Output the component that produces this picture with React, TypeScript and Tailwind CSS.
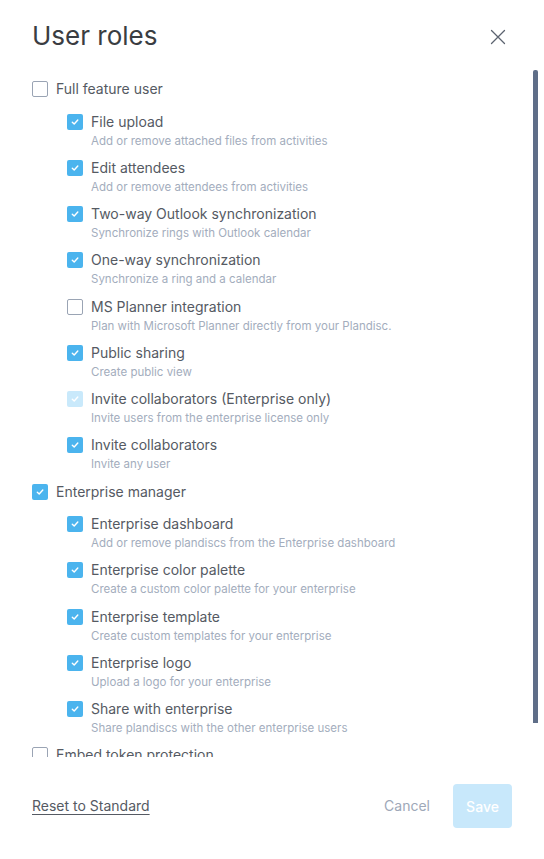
import React from "react";

type Item = { label: string; desc?: string; state: "on" | "off" | "disabled" };

const fullFeature: Item[] = [
  { label: "File upload", desc: "Add or remove attached files from activities", state: "on" },
  { label: "Edit attendees", desc: "Add or remove attendees from activities", state: "on" },
  { label: "Two-way Outlook synchronization", desc: "Synchronize rings with Outlook calendar", state: "on" },
  { label: "One-way synchronization", desc: "Synchronize a ring and a calendar", state: "on" },
  { label: "MS Planner integration", desc: "Plan with Microsoft Planner directly from your Plandisc.", state: "off" },
  { label: "Public sharing", desc: "Create public view", state: "on" },
  { label: "Invite collaborators (Enterprise only)", desc: "Invite users from the enterprise license only", state: "disabled" },
  { label: "Invite collaborators", desc: "Invite any user", state: "on" },
];

const enterprise: Item[] = [
  { label: "Enterprise dashboard", desc: "Add or remove plandiscs from the Enterprise dashboard", state: "on" },
  { label: "Enterprise color palette", desc: "Create a custom color palette for your enterprise", state: "on" },
  { label: "Enterprise template", desc: "Create custom templates for your enterprise", state: "on" },
  { label: "Enterprise logo", desc: "Upload a logo for your enterprise", state: "on" },
  { label: "Share with enterprise", desc: "Share plandiscs with the other enterprise users", state: "on" },
];

function Box({ state }: { state: "on" | "off" | "disabled" }) {
  if (state === "off") {
    return <span className="w-4 h-4 shrink-0 rounded-[2px] border border-[#9aa4b4] bg-white" />;
  }
  return (
    <span
      className={
        "w-4 h-4 shrink-0 rounded-[2px] flex items-center justify-center " +
        (state === "on" ? "bg-[#4bb4ee]" : "bg-[#c9e9fb]")
      }
    >
      <svg width="10" height="10" viewBox="0 0 10 10" fill="none">
        <path d="M2.3 5.2 L4.2 7 L7.8 3" stroke="white" strokeWidth="1.4" strokeLinecap="round" strokeLinejoin="round" />
      </svg>
    </span>
  );
}

function Child({ item }: { item: Item }) {
  return (
    <div className="flex flex-col">
      <div className="flex items-center gap-2 h-5">
        <Box state={item.state} />
        <span className="text-[14px] text-[#555a63] leading-5">{item.label}</span>
      </div>
      <div className="pl-6 pt-[1px] text-[11.5px] leading-[17.15px] text-[#a3adbd]">{item.desc}</div>
    </div>
  );
}

function Top({ label, state }: { label: string; state: "on" | "off" }) {
  return (
    <div className="flex items-center gap-2 h-5">
      <Box state={state} />
      <span className="text-[14px] text-[#555a63] leading-5">{label}</span>
    </div>
  );
}

export default function App() {
  return (
    <div
      className="w-[544px] h-[859px] bg-white flex flex-col overflow-hidden"
      style={{ fontFamily: "Inter, 'Noto Sans', sans-serif" }}
    >
      <div className="h-[70px] flex items-start justify-between pl-[32px] pr-[38px] pt-[18px]">
        <h1 className="text-[26px] leading-[36px] text-[#3a3d42] font-normal">User roles</h1>
        <svg width="16" height="16" viewBox="0 0 16 16" className="mt-[11px]" fill="none">
          <path d="M1.5 1.5 L14.5 14.5 M14.5 1.5 L1.5 14.5" stroke="#5c6370" strokeWidth="1.3" strokeLinecap="round" />
        </svg>
      </div>
      <div className="h-[687px] flex">
        <div className="flex-1 overflow-hidden pl-[32px] pt-[9px] flex flex-col">
          <Top label="Full feature user" state="off" />
          <div className="pl-[35px] mt-[13px] flex flex-col gap-2">
            {fullFeature.map((it) => (
              <Child key={it.label} item={it} />
            ))}
          </div>
          <div className="mt-[9px]">
            <Top label="Enterprise manager" state="on" />
          </div>
          <div className="pl-[35px] mt-[12px] flex flex-col gap-2">
            {enterprise.map((it) => (
              <Child key={it.label} item={it} />
            ))}
          </div>
          <div className="mt-2">
            <Top label="Embed token protection" state="off" />
          </div>
        </div>
        <div className="w-[11px] flex">
          <div className="w-[5px] h-[653px] bg-[#5f6e88] rounded-t-[2px]" />
        </div>
      </div>
      <div className="flex items-center justify-between pl-[32px] pr-[32px] pt-[27px]">
        <button className="text-[14px] text-[#555a63] underline underline-offset-[3px] leading-5 -mt-[1px]">Reset to Standard</button>
        <div className="flex items-center gap-[23px]">
          <button className="text-[14px] text-[#9ea8b8] leading-5 -mt-[1px]">Cancel</button>
          <button className="w-[59px] h-[44px] rounded-[4px] bg-[#c8e8fb] text-white text-[14px] font-medium">
            Save
          </button>
        </div>
      </div>
    </div>
  );
}
